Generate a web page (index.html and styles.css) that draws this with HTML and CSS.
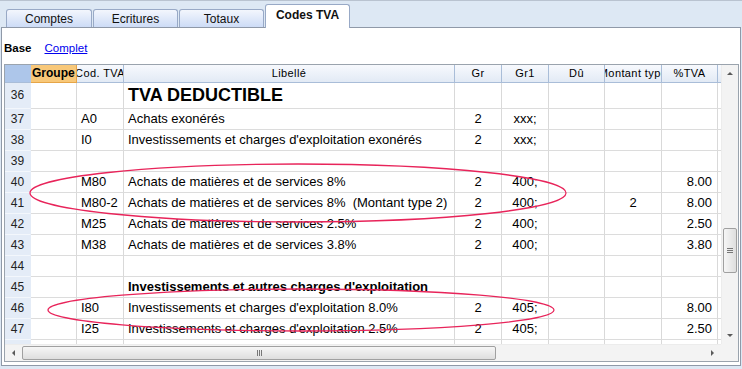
FILE: index.html
```html
<!DOCTYPE html>
<html lang="fr">
<head>
<meta charset="UTF-8">
<meta name="viewport" content="width=device-width, initial-scale=1.0">
<link rel="stylesheet" href="styles.css">
<title>Codes TVA</title>
</head>
<body>

<div class="tabs">
<div class="tab first">Comptes</div>
<div class="tab">Ecritures</div>
<div class="tab">Totaux</div>
<div class="tab active">Codes TVA</div>
</div>

<div class="panel">

<div class="views">
<b class="viewName">Base</b>
<a href="#" class="viewLink">Complet</a>
</div>

<div class="grid">

<div class="gridMain">
<div class="tableWrap">
<table class="vatTable">
<thead>
<tr>
<th class="rowNum corner"></th>
<th class="colGroup"><span>Groupe</span></th>
<th class="colCode"><span>Cod. TVA</span></th>
<th class="colText"><span>Libellé</span></th>
<th class="colGr"><span>Gr</span></th>
<th class="colGr1"><span>Gr1</span></th>
<th class="colDue"><span>Dû</span></th>
<th class="colType"><span>Montant type</span></th>
<th class="colPct"><span>%TVA</span></th>
<th class="colMore"><span>%Imp</span></th>
</tr>
</thead>
<tbody>
<tr class="tall">
<td class="rowNum">36</td><td></td><td></td>
<td class="left title">TVA DEDUCTIBLE</td>
<td></td><td></td><td></td><td></td><td></td><td></td>
</tr>
<tr>
<td class="rowNum">37</td><td></td><td class="left">A0</td>
<td class="left">Achats exonérés</td>
<td class="mid">2</td><td class="mid">xxx;</td><td></td><td></td><td></td><td></td>
</tr>
<tr>
<td class="rowNum">38</td><td></td><td class="left">I0</td>
<td class="left">Investissements et charges d'exploitation exonérés</td>
<td class="mid">2</td><td class="mid">xxx;</td><td></td><td></td><td></td><td></td>
</tr>
<tr>
<td class="rowNum">39</td><td></td><td></td><td></td>
<td></td><td></td><td></td><td></td><td></td><td></td>
</tr>
<tr>
<td class="rowNum">40</td><td></td><td class="left">M80</td>
<td class="left">Achats de matières et de services 8%</td>
<td class="mid">2</td><td class="mid">400;</td><td></td><td></td><td class="num">8.00</td><td></td>
</tr>
<tr>
<td class="rowNum">41</td><td></td><td class="left">M80-2</td>
<td class="left">Achats de matières et de services 8%&nbsp;&nbsp;(Montant type 2)</td>
<td class="mid">2</td><td class="mid">400;</td><td></td><td class="mid">2</td><td class="num">8.00</td><td></td>
</tr>
<tr>
<td class="rowNum">42</td><td></td><td class="left">M25</td>
<td class="left">Achats de matières et de services 2.5%</td>
<td class="mid">2</td><td class="mid">400;</td><td></td><td></td><td class="num">2.50</td><td></td>
</tr>
<tr>
<td class="rowNum">43</td><td></td><td class="left">M38</td>
<td class="left">Achats de matières et de services 3.8%</td>
<td class="mid">2</td><td class="mid">400;</td><td></td><td></td><td class="num">3.80</td><td></td>
</tr>
<tr>
<td class="rowNum">44</td><td></td><td></td><td></td>
<td></td><td></td><td></td><td></td><td></td><td></td>
</tr>
<tr>
<td class="rowNum">45</td><td></td><td></td>
<td class="left sub">Investissements et autres charges d'exploitation</td>
<td></td><td></td><td></td><td></td><td></td><td></td>
</tr>
<tr>
<td class="rowNum">46</td><td></td><td class="left">I80</td>
<td class="left">Investissements et charges d'exploitation 8.0%</td>
<td class="mid">2</td><td class="mid">405;</td><td></td><td></td><td class="num">8.00</td><td></td>
</tr>
<tr>
<td class="rowNum">47</td><td></td><td class="left">I25</td>
<td class="left">Investissements et charges d'exploitation 2.5%</td>
<td class="mid">2</td><td class="mid">405;</td><td></td><td></td><td class="num">2.50</td><td></td>
</tr>
<tr>
<td class="rowNum">48</td><td></td><td></td><td></td>
<td></td><td></td><td></td><td></td><td></td><td></td>
</tr>
</tbody>
</table>
</div>

<div class="vScroll">
<span class="arrow up"></span>
<div class="vTrack"><div class="vThumb"><i></i><i></i><i></i></div></div>
<span class="arrow down"></span>
</div>
</div>

<div class="gridFoot">
<div class="hScroll">
<span class="arrow leftArr"></span>
<div class="hTrack"><div class="hThumb"><i></i><i></i><i></i></div></div>
<span class="arrow rightArr"></span>
</div>
<div class="scrollCorner"></div>
</div>

</div>

</div>

<!-- annotations drawn over the grid -->
<svg class="marks" width="742" height="369" viewBox="0 0 742 369">
<ellipse cx="298" cy="192" rx="268" ry="29" />
<ellipse cx="301" cy="309" rx="253" ry="21" />
</svg>

</body>
</html>
```

FILE: styles.css
```css
*:after,*,*:before{
margin: 0;
padding: 0;
box-sizing: border-box;
}

html,body{
width: 742px;
height: 369px;
overflow: hidden;
}

body{
position: relative;
background: #dde8f4;
border-top: 1px solid #b9c3d0;
font-family: "Liberation Sans", Arial, sans-serif;
font-size: 11px;
color: #000;
}

a{
color: #0000ee;
}



/* tabs */

.tabs{
height: 26px;
padding-left: 6px;
display: flex;
align-items: flex-end;
gap: 1px;
}

.tab{
width: 85px;
height: 18px;
display: flex;
align-items: center;
justify-content: center;
padding-top: 1px;
background: linear-gradient(#f3f6fd, #cddcf6);
border: 1px solid #98a9c6;
border-bottom: none;
border-radius: 3px 3px 0 0;
font-size: 12px;
color: #111;
}

.tab.first{
width: 86px;
}

.tab.active{
position: relative;
z-index: 2;
height: 24px;
margin-bottom: -1px;
padding-top: 0;
padding-bottom: 3px;
background: #fff;
font-weight: bold;
}



/* panel */

.panel{
margin: 0 1px;
width: 740px;
height: 339px;
padding: 0 1px 0 2px;
background: #fff;
border: 1px solid #8f99a8;
}

.views{
height: 36px;
padding: 14px 0 0 0;
display: flex;
gap: 13px;
font-size: 11.5px;
}



/* grid */

.grid{
width: 735px;
height: 298px;
border: 1px solid #9aa3ad;
display: flex;
flex-direction: column;
}

.gridMain{
height: 279px;
display: flex;
}

.tableWrap{
width: 716px;
height: 279px;
overflow: hidden;
}

.vatTable{
width: 773px;
table-layout: fixed;
border-collapse: separate;
border-spacing: 0;
}

.vatTable th,
.vatTable td{
padding: 0;
overflow: hidden;
white-space: nowrap;
border-right: 1px solid #d9d9d9;
border-bottom: 1px solid #dcdcdc;
height: 21px;
line-height: 20px;
font-size: 13px;
}

.vatTable th{
height: 18px;
line-height: 17px;
font-size: 11px;
letter-spacing: 0.4px;
font-weight: normal;
background: linear-gradient(#f7f9fd, #e2eaf5);
border-right: 1px solid #a9bdd8;
border-bottom: 1px solid #a9bdd8;
}

.vatTable th span{
display: flex;
justify-content: center;
overflow: hidden;
}

.vatTable th.corner{
background: #adc6ea;
border-right-color: #adc6ea;
}

.vatTable th.colGroup{
background: #f8c879;
border-right-color: #e6a547;
border-bottom-color: #e6a547;
font-weight: bold;
font-size: 12px;
letter-spacing: 0;
}

.vatTable th.colGroup span{
justify-content: flex-start;
padding-left: 1px;
}

.rowNum{width: 26px;}
.colGroup{width: 46px;}
.colCode{width: 47px;}
.colText{width: 331px;}
.colGr{width: 47px;}
.colGr1{width: 47px;}
.colDue{width: 56px;}
.colType{width: 57px;}
.colPct{width: 56px;}
.colMore{width: 60px;}

.vatTable td.rowNum{
background: #e4ecf7;
border-right: 1px solid #e4ecf7;
border-bottom: 1px solid #f3f7fc;
text-align: center;
font-size: 12px;
color: #222;
}

.vatTable tr.tall td{
height: 26px;
line-height: 25px;
}

.left{
padding-left: 4px !important;
text-align: left;
}

.mid{
text-align: center;
}

.num{
text-align: right;
padding-right: 5px !important;
}

.title{
font-size: 18px !important;
font-weight: bold;
}

.sub{
font-weight: bold;
}



/* scrollbars */

.vScroll{
width: 17px;
height: 279px;
display: flex;
flex-direction: column;
align-items: center;
background: #f3f3f3;
border-left: 1px solid #ececec;
}

.vTrack{
flex: 1;
width: 100%;
padding-top: 146px;
}

.vThumb{
height: 45px;
margin: 0 1px;
display: flex;
flex-direction: column;
align-items: center;
justify-content: center;
gap: 1px;
background: linear-gradient(90deg, #f6f6f6, #dedede);
border: 1px solid #a0a0a0;
border-radius: 2px;
}

.vThumb i{
width: 6px;
height: 1px;
background: #777;
}

.gridFoot{
height: 17px;
display: flex;
}

.hScroll{
width: 716px;
display: flex;
align-items: center;
background: #f3f3f3;
border-top: 1px solid #ececec;
}

.hTrack{
flex: 1;
height: 100%;
padding: 1px 0;
}

.hThumb{
width: 474px;
height: 100%;
display: flex;
align-items: center;
justify-content: center;
gap: 1px;
background: linear-gradient(#f6f6f6, #dedede);
border: 1px solid #a0a0a0;
border-radius: 2px;
}

.hThumb i{
width: 1px;
height: 6px;
background: #777;
}

.scrollCorner{
width: 17px;
background: #f3f3f3;
}

.arrow{
width: 17px;
height: 17px;
display: flex;
align-items: center;
justify-content: center;
flex: none;
}

.arrow:after{
content: "";
border: 3px solid transparent;
}

.arrow.up:after{
border-bottom: 3px solid #5a5a5a;
margin-top: -3px;
}

.arrow.down:after{
border-top: 3px solid #5a5a5a;
margin-top: 3px;
}

.arrow.leftArr:after{
border-right: 3px solid #5a5a5a;
margin-left: -3px;
}

.arrow.rightArr:after{
border-left: 3px solid #5a5a5a;
margin-left: 3px;
}



/* red annotation rings */

.marks{
position: absolute;
top: 0;
left: 0;
pointer-events: none;
}

.marks ellipse{
fill: none;
stroke: #e8245a;
stroke-width: 1.3;
}
```
